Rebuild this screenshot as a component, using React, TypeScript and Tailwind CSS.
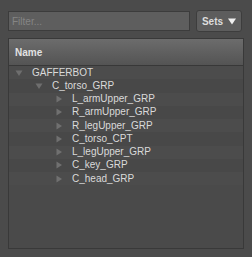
const items = [
  { name: 'GAFFERBOT', depth: 0, open: true },
  { name: 'C_torso_GRP', depth: 1, open: true },
  { name: 'L_armUpper_GRP', depth: 2, open: false },
  { name: 'R_armUpper_GRP', depth: 2, open: false },
  { name: 'R_legUpper_GRP', depth: 2, open: false },
  { name: 'C_torso_CPT', depth: 2, open: false },
  { name: 'L_legUpper_GRP', depth: 2, open: false },
  { name: 'C_key_GRP', depth: 2, open: false },
  { name: 'C_head_GRP', depth: 2, open: false },
];

const Arrow: React.FC<{ open: boolean }> = ({ open }) =>
  open ? (
    <svg width="8" height="8" viewBox="0 0 8 8" className="shrink-0">
      <path d="M0.5 1.5 L7.5 1.5 L4 7 Z" fill="#6e6e6e" />
    </svg>
  ) : (
    <svg width="8" height="8" viewBox="0 0 8 8" className="shrink-0">
      <path d="M1.5 0.5 L7 4 L1.5 7.5 Z" fill="#707070" />
    </svg>
  );

export default function App() {
  return (
    <div
      className="w-[252px] h-[257px] bg-[#4b4b4b] flex flex-col pl-2 pr-2 pb-2 pt-[10px]"
      style={{ fontFamily: '"Liberation Sans", Arial, sans-serif' }}
    >
      <div className="flex items-center gap-[6px] pr-[2px] h-[22px]">
        <div className="flex-1 h-[20px] bg-[#5e5e5e] border border-[#3c3c3c] flex items-center pl-[3px]">
          <span className="text-[10px] text-[#858585]">Filter...</span>
        </div>
        <div className="w-[46px] h-[22px] rounded-[3px] bg-[#5d5d5d] border border-[#3d3d3d] flex items-center justify-center gap-[5px]">
          <span className="text-[10px] font-bold text-[#dcdcdc]">Sets</span>
          <svg width="8" height="8" viewBox="0 0 8 8">
            <path d="M0 1.5 L8 1.5 L4 7.5 Z" fill="#f0f0f0" />
          </svg>
        </div>
      </div>
      <div className="mt-[6px] flex-1 border border-[#393939] bg-[#4a4a4a] flex flex-col">
        <div className="h-[27px] shrink-0 bg-gradient-to-b from-[#6c6c6c] to-[#545454] border-b border-[#383838] flex items-center pl-[6px]">
          <span className="text-[10px] font-bold text-[#e2e2e2]">Name</span>
        </div>
        <div className="flex flex-col">
          {items.map((it, i) => (
            <div
              key={it.name}
              className={`h-[13.25px] flex items-center ${i % 2 === 0 ? 'bg-[#4c4c4c]' : 'bg-[#484848]'}`}
              style={{ paddingLeft: 6 + it.depth * 20 }}
            >
              <Arrow open={it.open} />
              <span className="ml-[9px] text-[10px] leading-none text-[#dadada]">{it.name}</span>
            </div>
          ))}
        </div>
      </div>
    </div>
  );
}
